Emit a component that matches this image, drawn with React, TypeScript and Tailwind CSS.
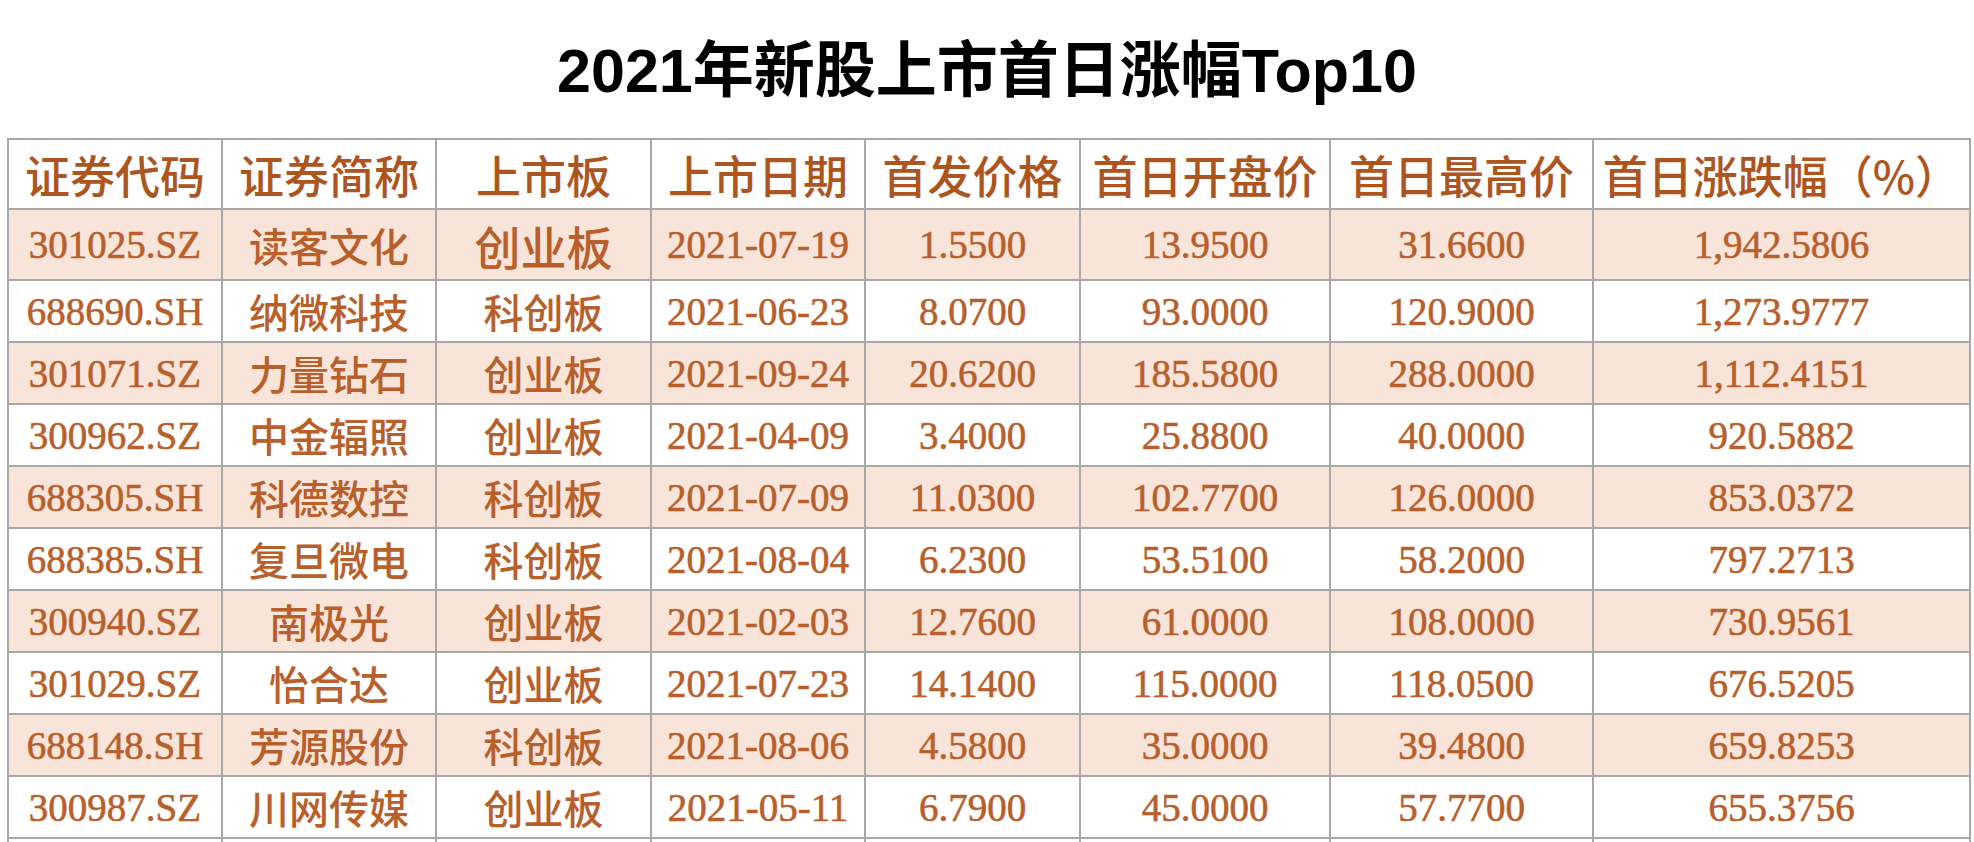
const rows = [
  { code: '301025.SZ', name: '读客文化', board: '创业板', date: '2021-07-19', ipo: '1.5500', open: '13.9500', high: '31.6600', pct: '1,942.5806' },
  { code: '688690.SH', name: '纳微科技', board: '科创板', date: '2021-06-23', ipo: '8.0700', open: '93.0000', high: '120.9000', pct: '1,273.9777' },
  { code: '301071.SZ', name: '力量钻石', board: '创业板', date: '2021-09-24', ipo: '20.6200', open: '185.5800', high: '288.0000', pct: '1,112.4151' },
  { code: '300962.SZ', name: '中金辐照', board: '创业板', date: '2021-04-09', ipo: '3.4000', open: '25.8800', high: '40.0000', pct: '920.5882' },
  { code: '688305.SH', name: '科德数控', board: '科创板', date: '2021-07-09', ipo: '11.0300', open: '102.7700', high: '126.0000', pct: '853.0372' },
  { code: '688385.SH', name: '复旦微电', board: '科创板', date: '2021-08-04', ipo: '6.2300', open: '53.5100', high: '58.2000', pct: '797.2713' },
  { code: '300940.SZ', name: '南极光', board: '创业板', date: '2021-02-03', ipo: '12.7600', open: '61.0000', high: '108.0000', pct: '730.9561' },
  { code: '301029.SZ', name: '怡合达', board: '创业板', date: '2021-07-23', ipo: '14.1400', open: '115.0000', high: '118.0500', pct: '676.5205' },
  { code: '688148.SH', name: '芳源股份', board: '科创板', date: '2021-08-06', ipo: '4.5800', open: '35.0000', high: '39.4800', pct: '659.8253' },
  { code: '300987.SZ', name: '川网传媒', board: '创业板', date: '2021-05-11', ipo: '6.7900', open: '45.0000', high: '57.7700', pct: '655.3756' },
];

const headers = ['证券代码', '证券简称', '上市板', '上市日期', '首发价格', '首日开盘价', '首日最高价', '首日涨跌幅（%）'];
const widths = ['w-[214px]', 'w-[214px]', 'w-[215px]', 'w-[214px]', 'w-[215px]', 'w-[250px]', 'w-[263px]', 'w-[377px]'];

const cell = 'border-2 border-[#a8a8a8] p-0 text-center align-middle';
// numbers are a touch heavier than plain Times in the sheet
const num = "font-['Liberation_Serif',serif] text-[39px] [-webkit-text-stroke:0.6px_currentColor]";
const cjk = "font-['Noto_Sans_CJK_SC','Liberation_Serif',sans-serif] font-medium text-[40px]";

export default function App() {
  return (
    <div className="min-h-screen bg-white">
      <div className="flex h-[138px] items-center justify-center pt-1">
        <h1 className="font-['Liberation_Sans','Noto_Sans_CJK_SC',sans-serif] text-[61px] font-bold leading-none text-black">
          2021年新股上市首日涨幅Top10
        </h1>
      </div>

      <table className="ml-[7px] w-[1962px] table-fixed border-collapse text-[#b95f2c]">
        <colgroup>
          {widths.map((w, i) => (
            <col key={i} className={w} />
          ))}
        </colgroup>
        <thead>
          <tr className="h-[70px]">
            {headers.map((h) => (
              <th
                key={h}
                className={`${cell} font-['Noto_Sans_CJK_SC','Liberation_Serif',sans-serif] text-[45px] font-medium leading-none text-[#ad551f]`}
              >
                {h}
              </th>
            ))}
          </tr>
        </thead>
        <tbody>
          {rows.map((r, i) => (
            <tr key={r.code} className={`${i === 0 ? 'h-[71px]' : 'h-[62px]'} ${i % 2 === 0 ? 'bg-[#f8e4d8]' : 'bg-white'}`}>
              <td className={`${cell} ${num} leading-none`}>{r.code}</td>
              <td className={`${cell} ${cjk} leading-none`}>{r.name}</td>
              <td className={`${cell} ${cjk} leading-none ${i === 0 ? 'text-[46px]' : ''}`}>{r.board}</td>
              <td className={`${cell} ${num} leading-none`}>{r.date}</td>
              <td className={`${cell} ${num} leading-none`}>{r.ipo}</td>
              <td className={`${cell} ${num} leading-none`}>{r.open}</td>
              <td className={`${cell} ${num} leading-none`}>{r.high}</td>
              <td className={`${cell} ${num} leading-none`}>{r.pct}</td>
            </tr>
          ))}
          <tr className="h-[62px] bg-white">
            {headers.map((h) => (
              <td key={h} className={cell} />
            ))}
          </tr>
        </tbody>
      </table>
    </div>
  );
}
